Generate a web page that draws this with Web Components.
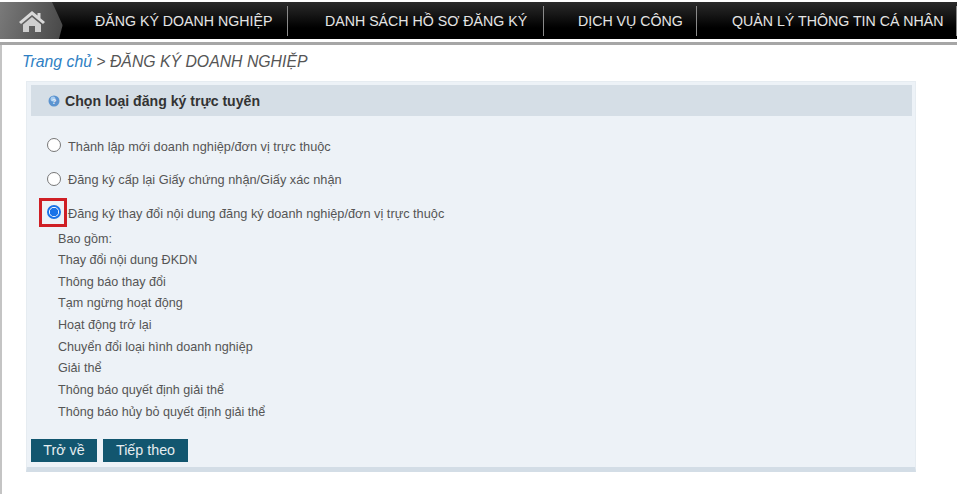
<!DOCTYPE html>
<html lang="vi">
<head>
<meta charset="utf-8">
<title>Đăng ký doanh nghiệp</title>
<style>
    html, body { margin: 0; background: #fff; }
    body { font-family: "Liberation Sans", Arial, sans-serif; height: 494px; overflow: hidden; }
</style>
</head>
<body>
<top-nav>
    <nav-item style="width:194px;padding-left:1px">ĐĂNG KÝ DOANH NGHIỆP</nav-item>
    <nav-item style="width:256px;padding-left:37px">DANH SÁCH HỒ SƠ ĐĂNG KÝ</nav-item>
    <nav-item style="width:153px;padding-left:34px">DỊCH VỤ CÔNG</nav-item>
    <nav-item style="width:260px;padding-left:35px">QUẢN LÝ THÔNG TIN CÁ NHÂN</nav-item>
</top-nav>
<page-content>
    <bread-crumb current="ĐĂNG KÝ DOANH NGHIỆP">Trang chủ</bread-crumb>
    <form-panel heading="Chọn loại đăng ký trực tuyến">
        <radio-row>Thành lập mới doanh nghiệp/đơn vị trực thuộc</radio-row>
        <radio-row>Đăng ký cấp lại Giấy chứng nhận/Giấy xác nhận</radio-row>
        <radio-row checked>Đăng ký thay đổi nội dung đăng ký doanh nghiệp/đơn vị trực thuộc</radio-row>
        <sub-list>
            <div>Bao gồm:</div>
            <div>Thay đổi nội dung ĐKDN</div>
            <div>Thông báo thay đổi</div>
            <div>Tạm ngừng hoạt động</div>
            <div>Hoạt động trở lại</div>
            <div>Chuyển đổi loại hình doanh nghiệp</div>
            <div>Giải thể</div>
            <div>Thông báo quyết định giải thể</div>
            <div>Thông báo hủy bỏ quyết định giải thể</div>
        </sub-list>
        <button-bar>
            <app-button style="width:66px">Trở về</app-button>
            <app-button style="width:85px">Tiếp theo</app-button>
        </button-bar>
    </form-panel>
</page-content>
<script>
// small helper so each element below only has to give its markup
function shadow(el, html) {
    el.attachShadow({ mode: 'open' }).innerHTML = html;
}

class TopNav extends HTMLElement {
    connectedCallback() {
        shadow(this, `
            <style>
                :host { display: block; width: 957px; height: 44px; }
                .bar {
                    display: flex;
                    height: 37px;
                    margin-top: 1px;
                    background: linear-gradient(#2b2b2b, #000 70%);
                    position: relative;
                    top: 1px;
                }
                .home {
                    width: 94px;
                    flex: none;
                    display: flex;
                    align-items: center;
                    box-sizing: border-box;
                    padding-left: 18px;
                    background: linear-gradient(105deg, #7a7a7a 0, #4a4a4a 66px, transparent 67px);
                    clip-path: polygon(0 0, 52px 0, 69px 100%, 0 100%);
                }
                .items { display: flex; flex: 1; }
                .line { height: 3px; margin-top: 4px; background: #a6a6a6; }
            </style>
            <div class="bar">
                <div class="home">
                    <svg width="28" height="24" viewBox="0 0 28 24">
                        <path d="M14 2 L1 13 L3 15 L14 6 L25 15 L27 13 L22.5 9.2 V4 H19.5 V6.6 Z" fill="#d9d9d9"/>
                        <path d="M14 8 L5 15.4 V23 H11 V17 H17 V23 H23 V15.4 Z" fill="#cfcfcf"/>
                    </svg>
                </div>
                <div class="items"><slot></slot></div>
            </div>
            <div class="line"></div>
        `);
    }
}

class NavItem extends HTMLElement {
    connectedCallback() {
        shadow(this, `
            <style>
                :host {
                    display: flex;
                    align-items: center;
                    flex: none;
                    box-sizing: border-box;
                    height: 37px;
                    color: #e4e4e4;
                    font-size: 14.2px;
                    white-space: nowrap;
                    position: relative;
                }
                .sep {
                    position: absolute;
                    right: 0;
                    top: 4px;
                    height: 30px;
                    width: 1px;
                    background: #8a8a8a;
                }
            </style>
            <slot></slot><span class="sep"></span>
        `);
    }
}

class PageContent extends HTMLElement {
    connectedCallback() {
        shadow(this, `
            <style>
                :host {
                    display: block;
                    height: 450px;
                    box-sizing: border-box;
                    border-left: 2px solid #c4c4c4;
                    padding: 8px 0 0 20px;
                }
            </style>
            <slot></slot>
        `);
    }
}

class BreadCrumb extends HTMLElement {
    connectedCallback() {
        shadow(this, `
            <style>
                :host {
                    display: block;
                    height: 28px;
                    font-size: 15.8px;
                    line-height: 18px;
                    font-style: italic;
                    color: #555;
                }
                a { color: #2f7fc4; text-decoration: none; }
            </style>
            <a href="#"><slot></slot></a> &gt; ${this.getAttribute('current')}
        `);
    }
}

class FormPanel extends HTMLElement {
    connectedCallback() {
        shadow(this, `
            <style>
                :host {
                    display: block;
                    box-sizing: border-box;
                    width: 890px;
                    height: 391px;
                    margin-left: 4px;
                    padding: 3px 3px 0 4px;
                    background: #edf2f7;
                    border: 1px solid #e6ecf1;
                    border-bottom: 5px solid #d3dde6;
                    color: #555;
                    font-size: 12px;
                }
                header {
                    display: flex;
                    align-items: center;
                    gap: 5px;
                    height: 31px;
                    padding-left: 17px;
                    background: #d5dee6;
                    font-size: 14.1px;
                    font-weight: bold;
                    color: #333;
                }
                .body { padding: 20px 0 0 12px; }
            </style>
            <header>
                <svg width="12" height="12" viewBox="0 0 12 12">
                    <circle cx="6" cy="6" r="5.5" fill="#5b93cf"/>
                    <circle cx="5" cy="4" r="2.5" fill="#a9cdf0"/>
                    <text x="6" y="9" font-size="8" font-family="Liberation Sans" font-weight="bold" text-anchor="middle" fill="#e6f0fa">?</text>
                </svg>
                <span>${this.getAttribute('heading')}</span>
            </header>
            <div class="body"><slot></slot></div>
        `);
    }
}

class RadioRow extends HTMLElement {
    connectedCallback() {
        const checked = this.hasAttribute('checked');
        shadow(this, `
            <style>
                :host {
                    display: flex;
                    align-items: center;
                    height: 20px;
                    margin-bottom: 13.5px;
                    font-size: 12.75px;
                    color: #555;
                    white-space: nowrap;
                }
                .wrap { position: relative; display: flex; width: 14px; height: 14px; margin: -2px 7px 0 4px; }
                .mark {
                    box-sizing: border-box;
                    width: 14px;
                    height: 14px;
                    border-radius: 50%;
                    background: #fff;
                    border: 1px solid #777;
                }
                .mark.on { border: 2px solid #1a73e8; background: radial-gradient(circle, #1a73e8 0 4px, #fff 4.5px); }
                .box {
                    position: absolute;
                    left: -8px;
                    top: -7px;
                    width: 28px;
                    height: 29px;
                    box-sizing: border-box;
                    border: 3px solid #cf1f25;
                }
            </style>
            <span class="wrap">
                <span class="mark ${checked ? 'on' : ''}"></span>
                ${checked ? '<span class="box"></span>' : ''}
            </span>
            <slot></slot>
        `);
    }
}

class SubList extends HTMLElement {
    connectedCallback() {
        shadow(this, `
            <style>
                :host {
                    display: block;
                    margin: -8px 0 0 15px;
                    font-size: 12.6px;
                    line-height: 21.65px;
                    color: #555;
                }
            </style>
            <slot></slot>
        `);
    }
}

class ButtonBar extends HTMLElement {
    connectedCallback() {
        shadow(this, `
            <style>
                :host { display: flex; gap: 6px; margin: 16px 0 0 -12px; }
            </style>
            <slot></slot>
        `);
    }
}

class AppButton extends HTMLElement {
    connectedCallback() {
        shadow(this, `
            <style>
                :host {
                    display: block;
                    box-sizing: border-box;
                    height: 23px;
                    line-height: 23px;
                    text-align: center;
                    background: #12566f;
                    color: #e6edf0;
                    font-size: 14.3px;
                    cursor: pointer;
                }
            </style>
            <slot></slot>
        `);
    }
}

customElements.define('top-nav', TopNav);
customElements.define('nav-item', NavItem);
customElements.define('page-content', PageContent);
customElements.define('bread-crumb', BreadCrumb);
customElements.define('form-panel', FormPanel);
customElements.define('radio-row', RadioRow);
customElements.define('sub-list', SubList);
customElements.define('button-bar', ButtonBar);
customElements.define('app-button', AppButton);
</script>
</body>
</html>
